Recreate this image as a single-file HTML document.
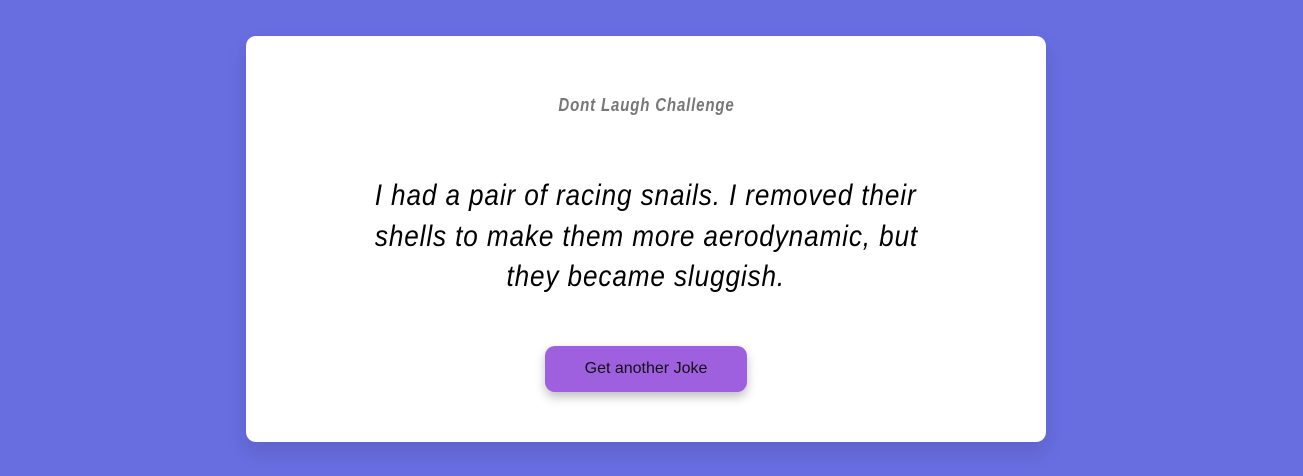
<!DOCTYPE html>
<html><head><meta charset="utf-8"><style>
html,body{margin:0;padding:0;}
body{width:1303px;height:476px;background:#686de0;position:relative;overflow:hidden;font-family:"Liberation Sans",sans-serif;}
.card{position:absolute;left:246px;top:36px;width:800px;height:406px;background:#fff;border-radius:10px;box-shadow:0 10px 20px rgba(0,0,0,0.1);text-align:center;}
.ln{position:absolute;left:0;right:0;white-space:nowrap;text-align:center;}
.ln span{display:inline-block;transform:scaleX(0.835);transform-origin:center;}
.t{top:58px;font-style:italic;font-weight:bold;font-size:18px;color:#777;letter-spacing:1px;line-height:22px;}
.j{font-style:italic;font-size:30px;line-height:40px;letter-spacing:1px;color:#000;}
.j span{transform:scaleX(0.872);}
.btn{position:absolute;left:299px;top:310px;width:202px;height:46px;background:#9f60e0;border-radius:10px;box-shadow:0 5px 10px rgba(0,0,0,0.25);font-size:16px;line-height:46px;color:#111;}
</style></head><body>
<div class="card">
<div class="ln t"><span>Dont Laugh Challenge</span></div>
<div class="ln j" style="top:140px"><span>I had a pair of racing snails. I removed their</span></div>
<div class="ln j" style="top:181px"><span>shells to make them more aerodynamic, but</span></div>
<div class="ln j" style="top:221px"><span>they became sluggish.</span></div>
<div class="btn">Get another Joke</div>
</div>
</body></html>
